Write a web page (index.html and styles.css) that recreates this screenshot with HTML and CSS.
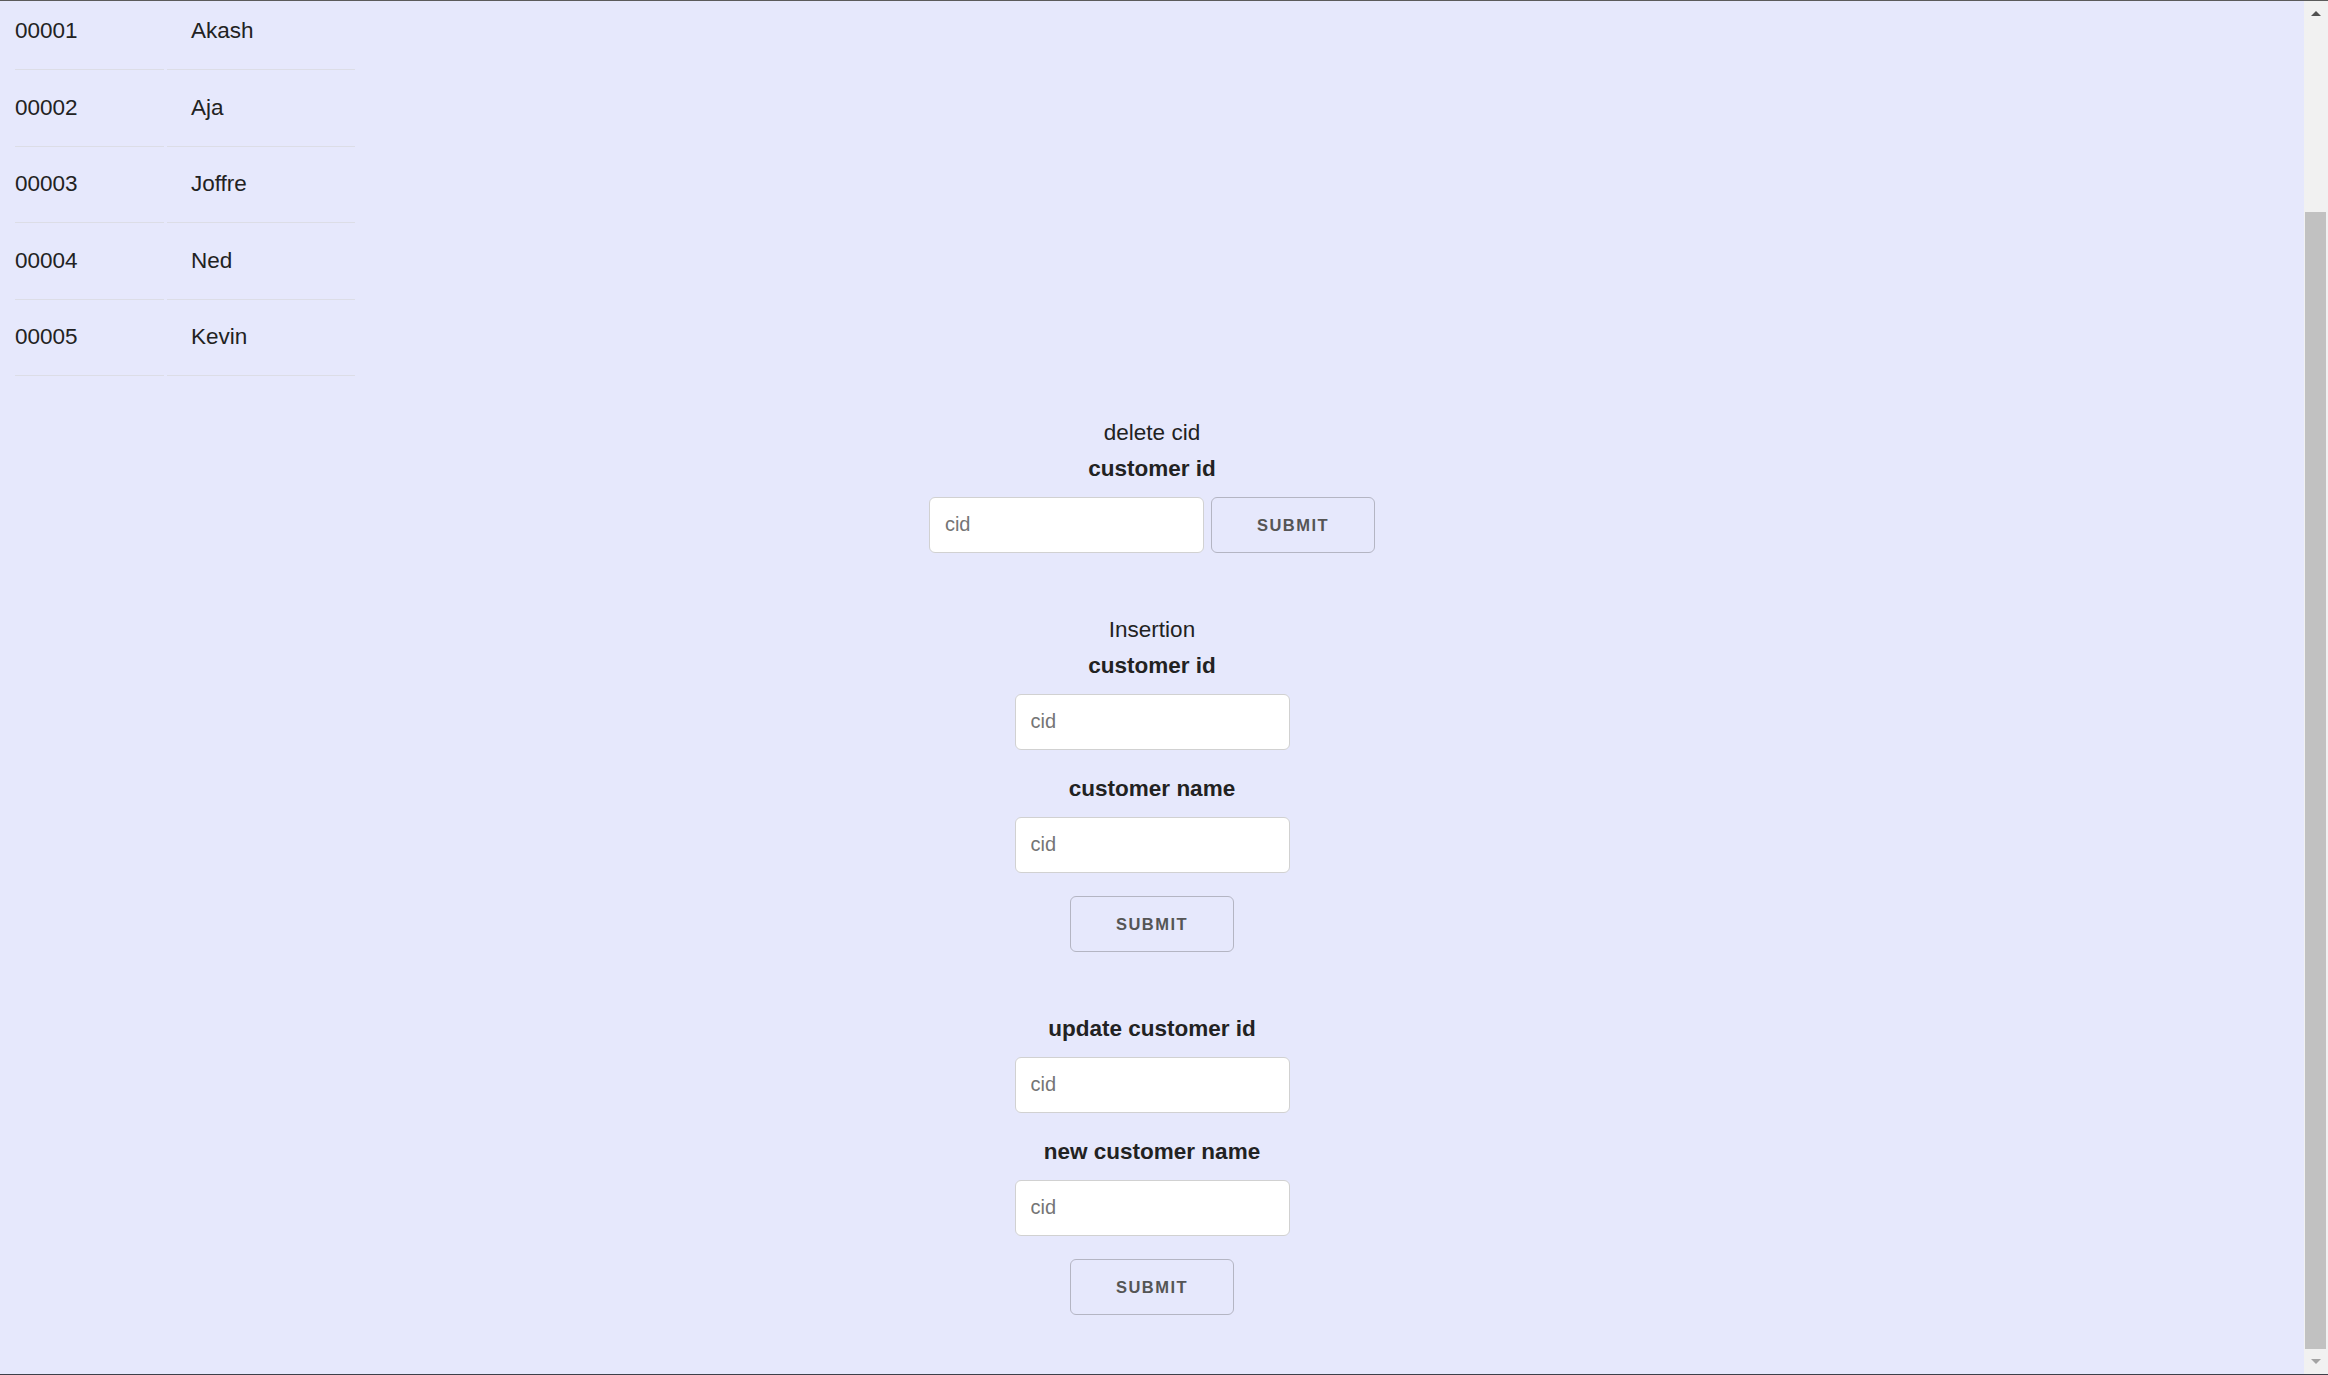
FILE: index.html
```html
<!DOCTYPE html>
<html lang="en">
<head>
<meta charset="utf-8">
<title>Customers</title>
<link rel="stylesheet" href="styles.css">
</head>
<body>
<div class="window">
  <main class="page">
    <table class="customers">
      <tbody>
        <tr><td class="cell-id">00001</td><td class="cell-name">Akash</td></tr>
        <tr><td class="cell-id">00002</td><td class="cell-name">Aja</td></tr>
        <tr><td class="cell-id">00003</td><td class="cell-name">Joffre</td></tr>
        <tr><td class="cell-id">00004</td><td class="cell-name">Ned</td></tr>
        <tr><td class="cell-id">00005</td><td class="cell-name">Kevin</td></tr>
      </tbody>
    </table>

    <div class="forms">
      <form class="form-block">
        <div class="title">delete cid</div>
        <div class="field">
          <label class="label">customer id</label>
          <div class="inline-row">
            <input class="text-input" type="text" placeholder="cid">
            <button class="btn" type="button">Submit</button>
          </div>
        </div>
      </form>

      <form class="form-block">
        <div class="title">Insertion</div>
        <div class="fields">
          <div class="field">
            <label class="label">customer id</label>
            <input class="text-input" type="text" placeholder="cid">
          </div>
          <div class="field">
            <label class="label">customer name</label>
            <input class="text-input" type="text" placeholder="cid">
          </div>
          <button class="btn btn-block" type="button">Submit</button>
        </div>
      </form>

      <form class="form-block">
        <div class="fields">
          <div class="field">
            <label class="label">update customer id</label>
            <input class="text-input" type="text" placeholder="cid">
          </div>
          <div class="field">
            <label class="label">new customer name</label>
            <input class="text-input" type="text" placeholder="cid">
          </div>
          <button class="btn btn-block" type="button">Submit</button>
        </div>
      </form>
    </div>
  </main>

  <div class="scrollbar">
    <div class="sb-btn"><span class="arrow-up"></span></div>
    <div class="sb-track"><div class="sb-thumb"></div></div>
    <div class="sb-btn"><span class="arrow-down"></span></div>
  </div>
</div>
</body>
</html>
```

FILE: styles.css
```css
html, body {
  margin: 0;
  padding: 0;
}

body {
  background: #e6e8fc;
  color: #222222;
  font-family: "Liberation Sans", Arial, sans-serif;
  overflow: hidden;
}

.window {
  height: 1375px;
  box-sizing: border-box;
  border-top: 1px solid #5b5b5b;
  border-bottom: 1px solid #3d4049;
  display: flex;
  overflow: hidden;
}

.page {
  flex: 1;
  min-width: 0;
  overflow: hidden;
  font-size: 22.5px;
  line-height: 36px;
}

/* table */
.customers {
  border-spacing: 3px;
  margin: -7.5px 0 0 12px;
  font-size: 22.5px;
  line-height: 36px;
}

.customers td {
  padding: 16.5px 22.5px 20px;
  border-bottom: 1px solid #dcdde6;
  text-align: left;
  white-space: nowrap;
}

.customers .cell-id {
  padding-left: 0;
  width: 126.5px;
}

.customers .cell-name {
  padding-left: 24px;
  width: 141.5px;
}

/* forms */
.forms {
  display: flex;
  flex-direction: column;
  align-items: center;
  gap: 59.5px;
  margin-top: 36px;
}

.form-block {
  display: flex;
  flex-direction: column;
  align-items: center;
  margin: 0;
}

.title {
  line-height: 36px;
}

.fields {
  display: flex;
  flex-direction: column;
  align-items: center;
  gap: 21.5px;
}

.field {
  display: flex;
  flex-direction: column;
  align-items: center;
}

.label {
  display: block;
  font-weight: 700;
  line-height: 36px;
  margin-bottom: 9.5px;
}

.inline-row {
  display: flex;
  gap: 7px;
}

.text-input {
  box-sizing: border-box;
  width: 275px;
  height: 56px;
  margin: 0;
  padding: 0 15px;
  border: 1px solid #d1d1d1;
  border-radius: 6px;
  background: #ffffff;
  font-family: "Liberation Sans", Arial, sans-serif;
  font-size: 20px;
  color: #222222;
  outline: none;
}

.text-input::placeholder {
  color: #757575;
}

.btn {
  box-sizing: border-box;
  height: 56px;
  margin: 0;
  padding: 0 45px;
  border: 1px solid #b4b5c3;
  border-radius: 6px;
  background: transparent;
  color: #555555;
  font-family: "Liberation Sans", Arial, sans-serif;
  font-size: 16.5px;
  font-weight: 700;
  letter-spacing: 1.5px;
  text-transform: uppercase;
  line-height: 54px;
  white-space: nowrap;
}

.btn-block {
  margin-top: 1.5px;
}

/* scrollbar */
.scrollbar {
  width: 24px;
  flex: none;
  background: #f1f1f1;
  display: flex;
  flex-direction: column;
}

.sb-btn {
  height: 25px;
  flex: none;
  display: flex;
  align-items: center;
  justify-content: center;
}

.arrow-up {
  width: 0;
  height: 0;
  border-left: 5.5px solid transparent;
  border-right: 5.5px solid transparent;
  border-bottom: 5px solid #505050;
}

.arrow-down {
  width: 0;
  height: 0;
  border-left: 5.5px solid transparent;
  border-right: 5.5px solid transparent;
  border-top: 5px solid #a3a3a3;
}

.sb-track {
  flex: 1;
  display: flex;
  flex-direction: column;
  justify-content: flex-end;
}

.sb-thumb {
  height: 1137px;
  margin: 0 2px 0 1px;
  background: #c1c1c1;
}
```
